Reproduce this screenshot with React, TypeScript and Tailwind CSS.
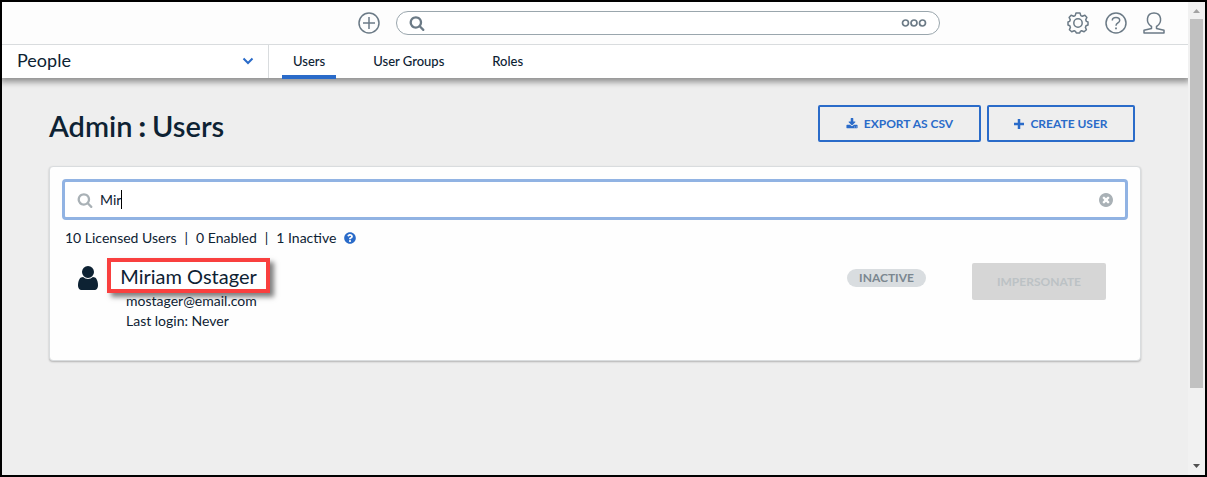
import { useState } from 'react';
import { FaQuestionCircle } from 'react-icons/fa';

interface IconProps {
  className?: string;
}

function SearchIcon({ className }: IconProps) {
  return (
    <svg viewBox="0 0 1792 1792" fill="currentColor" className={className} aria-hidden="true">
      <path d="M1216 832q0-185-131.5-316.5t-316.5-131.5-316.5 131.5-131.5 316.5 131.5 316.5 316.5 131.5 316.5-131.5 131.5-316.5zm512 832q0 52-38 90t-90 38q-54 0-90-38l-343-342q-179 124-399 124-143 0-273.5-55.5t-225-150-150-225-55.5-273.5 55.5-273.5 150-225 225-150 273.5-55.5 273.5 55.5 225 150 150 225 55.5 273.5q0 220-124 399l343 343q37 37 37 90z" />
    </svg>
  );
}

function PersonIcon({ className }: IconProps) {
  return (
    <svg viewBox="256 128 1280 1536" fill="currentColor" className={className} aria-hidden="true">
      <path d="M1536 1399q0 109-62.5 187t-150.5 78h-854q-88 0-150.5-78t-62.5-187q0-85 8.5-160.5t31.5-152 58.5-131 94-89 134.5-34.5q131 128 313 128t313-128q76 0 134.5 34.5t94 89 58.5 131 31.5 152 8.5 160.5zm-256-887q0 159-112.5 271.5t-271.5 112.5-271.5-112.5-112.5-271.5 112.5-271.5 271.5-112.5 271.5 112.5 112.5 271.5z" />
    </svg>
  );
}

function DownloadIcon({ className }: IconProps) {
  return (
    <svg viewBox="0 0 1792 1792" fill="currentColor" className={className} aria-hidden="true">
      <path d="M1344 1344q0-26-19-45t-45-19-45 19-19 45 19 45 45 19 45-19 19-45zm256 0q0-26-19-45t-45-19-45 19-19 45 19 45 45 19 45-19 19-45zm128-224v320q0 40-28 68t-68 28h-1472q-40 0-68-28t-28-68v-320q0-40 28-68t68-28h465l135 136q58 56 136 56t136-56l136-136h464q40 0 68 28t28 68zm-325-569q17 41-14 70l-448 448q-18 19-45 19t-45-19l-448-448q-31-29-14-70 17-39 59-39h256v-448q0-26 19-45t45-19h256q26 0 45 19t19 45v448h256q42 0 59 39z" />
    </svg>
  );
}

function ClearIcon({ className }: IconProps) {
  return (
    <svg viewBox="128 128 1536 1536" fill="currentColor" className={className} aria-hidden="true">
      <path d="M1277 1122q0-26-19-45l-181-181 181-181q19-19 19-45 0-27-19-46l-90-90q-19-19-46-19-26 0-45 19l-181 181-181-181q-19-19-45-19-27 0-46 19l-90 90q-19 19-19 46 0 26 19 45l181 181-181 181q-19 19-19 45 0 27 19 46l90 90q19 19 46 19 26 0 45-19l181-181 181 181q19 19 45 19 27 0 46-19l90-90q19-19 19-46zm387-226q0 209-103 385.5t-279.5 279.5-385.5 103-385.5-103-279.5-279.5-103-385.5 103-385.5 279.5-279.5 385.5-103 385.5 103 279.5 279.5 103 385.5z" />
    </svg>
  );
}

function TopBar() {
  return (
    <header className="relative z-10 flex h-[43px] items-center border-b border-[#d9dcde] bg-[#fdfdfd] pl-[30%] pr-[23px] text-[#6b7a86]">
      <button aria-label="Create" className="shrink-0">
        <svg viewBox="0 0 22 22" className="size-[22px]" fill="none" stroke="currentColor" strokeWidth="1.5">
          <circle cx="11" cy="11" r="10" />
          <path d="M11 5v12M5 11h12" />
        </svg>
      </button>
      <div className="ml-4 flex h-6 w-[67.4%] items-center rounded-full border border-[#9aa6ad] bg-white px-3">
        <SearchIcon className="size-4 shrink-0" />
        <input aria-label="Search everything" className="min-w-0 flex-1 px-2 text-sm outline-none" />
        <button aria-label="Search options">
          <svg viewBox="0 0 26 8" className="h-2 w-[26px]" fill="none" stroke="currentColor" strokeWidth="1.7">
            <circle cx="4.500" cy="4" r="3" />
            <circle cx="13" cy="4" r="3" />
            <circle cx="21.500" cy="4" r="3" />
          </svg>
        </button>
      </div>
      <div className="ml-auto flex items-center gap-4">
        <button aria-label="Settings">
          <svg viewBox="0 0 22 22" className="size-[22px]" fill="none" stroke="currentColor" strokeWidth="1.5" strokeLinejoin="round">
            <path d="M9 1h4l.8 2.600 1.500.7 2.600-1.100 2 2.200-1.200 2.400.7 1.600L21 10v3l-2 .8-.6 1.600 1 2.400-2.300 2-2.500-1-1.300.6L12.700 21H9.300l-.8-1.600-1.300-.6-2.500 1-2.300-2 1-2.400-.6-1.600-1.800-.8v-3l1.600-.6.7-1.600L2.100 5.400l2-2.200 2.600 1.100 1.500-.7z" />
            <circle cx="11" cy="11" r="4.200" />
          </svg>
        </button>
        <button aria-label="Help">
          <svg viewBox="0 0 22 22" className="size-[22px]" fill="none" stroke="currentColor" strokeWidth="1.5">
            <circle cx="11" cy="11" r="10" />
            <path d="M7.300 8.500c0-4 7.400-4 7.400 0 0 2.500-3.700 2.500-3.700 5.200" />
            <path d="M11 15.500v1.800" strokeWidth="1.800" />
          </svg>
        </button>
        <button aria-label="Account">
          <svg viewBox="0 0 22 22" className="size-[22px]" fill="none" stroke="currentColor" strokeWidth="1.5" strokeLinejoin="round">
            <path d="M8.500 14.500C2.500 11 3 1 11 1s8.500 10 2.500 13.500v2l7.500 1.700V21H1v-2.800l7.500-1.700z" />
          </svg>
        </button>
      </div>
    </header>
  );
}

const tabs = ['Users', 'User Groups', 'Roles'];

function NavBar() {
  return (
    <div className="relative flex h-[33px] bg-white shadow-[0_2px_6px_2px_rgba(0,0,0,0.4)]">
      <button className="flex w-[267px] items-center justify-between border-r border-[#d9dcde] pb-[3px] pl-[15px] pr-3.5 text-lg leading-6">
        People
        <svg viewBox="0 0 12 8" className="mt-0.5 h-2 w-3 text-[#2a6bc9]" fill="none" stroke="currentColor" strokeWidth="2">
          <path d="M1.500 1.500L6 6l4.500-4.500" />
        </svg>
      </button>
      <nav className="-mb-px ml-[13px] flex gap-[26px] text-[13px] font-medium">
        {tabs.map((tab) => (
          <a
            key={tab}
            href="#"
            className={
              tab === 'Users'
                ? 'flex items-center border-b-4 border-[#2a6bc9] px-[11px] pt-1'
                : 'flex items-center px-[11px]'
            }
          >
            {tab}
          </a>
        ))}
      </nav>
    </div>
  );
}

function UserRow() {
  return (
    <div className="mt-2.5 flex items-start pl-4 pr-[22px]">
      <PersonIcon className="mt-2 h-6 w-5 shrink-0" />
      <div className="ml-[9px]">
        <h2 className="flex h-[35px] w-[163px] items-center justify-center border-4 border-[#f9403f] bg-white text-xl shadow-[4px_4px_5px_rgba(0,0,0,0.5)]">
          Miriam Ostager
        </h2>
        <p className="pl-[19px] text-sm leading-4">mostager@email.com</p>
        <p className="pl-[19px] text-sm leading-6">Last login: Never</p>
      </div>
      <span className="ml-auto mt-[11px] w-[79px] rounded-full bg-[#d9dde0] text-center text-xs font-bold leading-[18px] text-[#7b8790]">
        INACTIVE
      </span>
      <button disabled className="ml-[46px] mt-[5px] h-[37px] w-[134px] rounded-xs bg-[#d6d6d6] text-xs font-bold text-[#bcc2c5]">
        IMPERSONATE
      </button>
    </div>
  );
}

function UsersPage() {
  const [query, setQuery] = useState('Mir');

  return (
    <main className="px-[47px] pt-[27px]">
      <div className="flex items-center justify-between pr-1.5">
        <h1 className="pt-1 text-[29px] font-semibold leading-8">
          Admin<span className="mx-1.5 font-black">:</span>Users
        </h1>
        <div className="flex gap-1.5 text-xs font-bold text-[#2a6bc9]">
          <button className="flex h-[37px] w-[163px] items-center justify-center gap-1.5 rounded-xs border-2 border-[#2a6bc9]">
            <DownloadIcon className="size-3" />
            EXPORT AS CSV
          </button>
          <button className="flex h-[37px] w-[148px] items-center justify-center gap-1.5 rounded-xs border-2 border-[#2a6bc9]">
            <svg viewBox="0 0 10 10" className="size-2.5" stroke="currentColor" strokeWidth="2.500" aria-hidden="true">
              <path d="M5 0v10M0 5h10" />
            </svg>
            CREATE USER
          </button>
        </div>
      </div>

      <section className="mt-6 rounded-sm border border-[#d9dcde] bg-[#fefefe] px-3 pb-[27px] pt-3 shadow-[0_1px_2px_rgba(0,0,0,0.25)]">
        <div className="flex h-[41px] items-center rounded-sm border-[3px] border-[#91b3e3] bg-white px-3">
          <SearchIcon className="size-4 shrink-0 text-[#a9b1b6]" />
          <input
            aria-label="Search users"
            value={query}
            onChange={(e) => setQuery(e.target.value)}
            className="field-sizing-content pl-[7px] text-sm caret-transparent outline-none"
          />
          <span className="h-[19px] w-px bg-black" />
          <button aria-label="Clear search" onClick={() => setQuery('')} className="ml-auto">
            <ClearIcon className="size-3.5 text-[#a9b1b6]" />
          </button>
        </div>
        <p className="mt-2 flex items-center gap-2 pl-[3px] text-sm leading-5">
          <span>10 Licensed Users</span>
          <span>|</span>
          <span>0 Enabled</span>
          <span>|</span>
          <span>1 Inactive</span>
          <FaQuestionCircle className="size-3 text-[#2a6bc9]" />
        </p>
        <UserRow />
      </section>
    </main>
  );
}

function ScrollRail() {
  return (
    <div className="flex w-[17px] shrink-0 flex-col items-center bg-[#f1f1f1]" aria-hidden="true">
      <svg viewBox="0 0 17 17" className="size-[17px]">
        <path d="M5 11h7L8.500 7z" fill="#a3a3a3" />
      </svg>
      <div className="h-[78%] w-[13px] bg-[#c1c1c1]" />
      <svg viewBox="0 0 17 17" className="mt-auto size-[17px]">
        <path d="M5 6h7l-3.500 4z" fill="#505050" />
      </svg>
    </div>
  );
}

export default function App() {
  return (
    <div className="flex min-h-screen border-2 border-black bg-[#eeeeee] font-['Lato',sans-serif] text-[#0d2233]">
      <div className="min-w-0 flex-1 overflow-hidden">
        <TopBar />
        <NavBar />
        <UsersPage />
      </div>
      <ScrollRail />
    </div>
  );
}
